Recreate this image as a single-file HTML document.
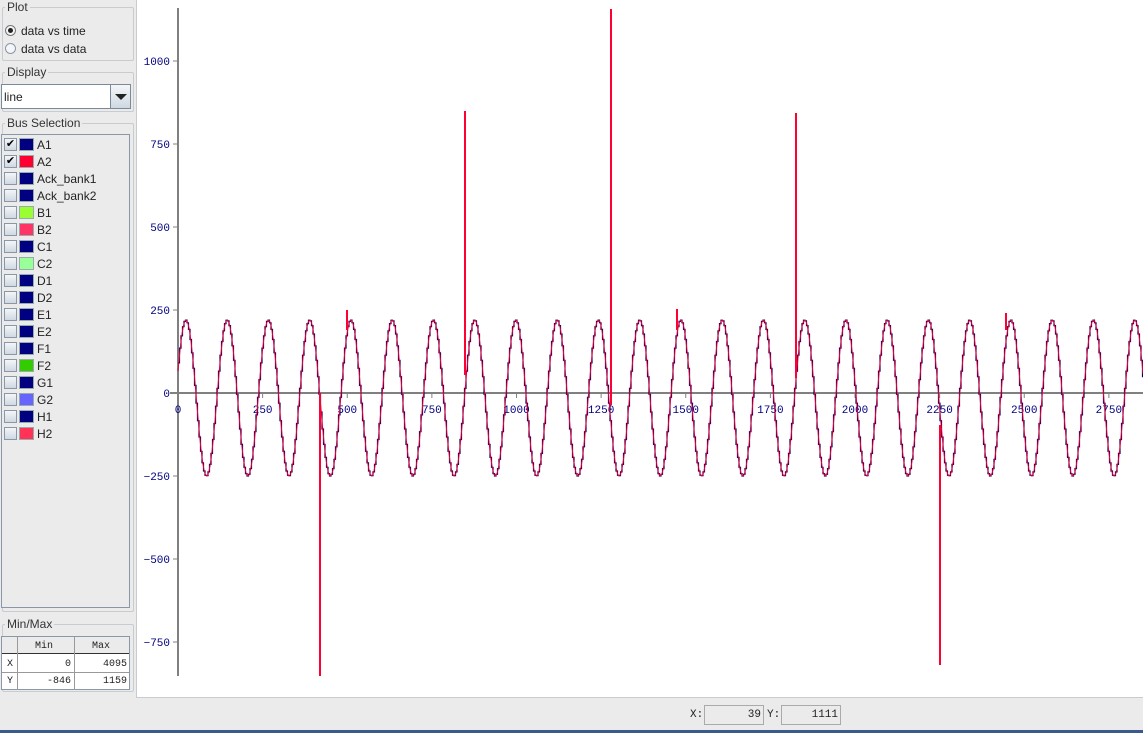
<!DOCTYPE html>
<html><head><meta charset="utf-8"><style>
*{margin:0;padding:0;box-sizing:border-box}
body{width:1143px;height:733px;background:#ebebeb;font-family:"Liberation Sans",sans-serif;font-size:12px;color:#222;position:relative;overflow:hidden}
.abs{position:absolute}
.grp{position:absolute;border:1px solid #c8ccd0;border-radius:2px}
.lg{position:absolute;background:#ebebeb;padding:0 2px;font-size:12px;color:#333}
.row{position:absolute;left:4px;height:16px;width:120px}
.cb{position:absolute;left:0;top:1px;width:13px;height:13px;border:1px solid #8a97a6;background:linear-gradient(#f4f6f8,#cfd8e2);font-size:11px;line-height:11px;text-align:center;color:#000}
.sw{position:absolute;left:15px;top:1px;width:15px;height:13px;border:1px solid #9aa;}
.lb{position:absolute;left:33px;top:1px;font-size:12px}
.mono{font-family:"Liberation Mono",monospace;font-size:10px}
</style></head><body>
<div class="grp" style="left:2px;top:7px;width:132px;height:54px"></div>
<div class="lg" style="left:5px;top:0px">Plot</div>
<div class="abs" style="left:5px;top:25px;width:11px;height:11px;border:1px solid #777;border-radius:50%;background:#f4f4f4"><div style="position:absolute;left:2px;top:2px;width:5px;height:5px;border-radius:50%;background:#222"></div></div>
<div class="abs" style="left:21px;top:24px">data vs time</div>
<div class="abs" style="left:5px;top:43px;width:11px;height:11px;border:1px solid #8a97a6;border-radius:50%;background:#f4f6f8"></div>
<div class="abs" style="left:21px;top:42px">data vs data</div>
<div class="grp" style="left:2px;top:72px;width:132px;height:40px"></div>
<div class="lg" style="left:5px;top:65px">Display</div>
<div class="abs" style="left:1px;top:84px;width:130px;height:25px;border:1px solid #7a8a99;background:#fff"><span style="position:absolute;left:2px;top:5px">line</span><div style="position:absolute;right:0;top:0;width:20px;height:23px;border-left:1px solid #7a8a99;background:linear-gradient(#f4f6f8,#cfd8e2)"><div style="position:absolute;left:4px;top:9px;border-left:6px solid transparent;border-right:6px solid transparent;border-top:6px solid #222"></div></div></div>
<div class="grp" style="left:2px;top:123px;width:132px;height:489px"></div>
<div class="lg" style="left:5px;top:116px">Bus Selection</div>
<div class="abs" style="left:1px;top:134px;width:129px;height:474px;border:1px solid #8a97a6;background:#ebebeb"></div>
<div id="rows"></div>
<div class="grp" style="left:2px;top:624px;width:132px;height:68px"></div>
<div class="lg" style="left:5px;top:617px">Min/Max</div>
<div class="abs mono" style="left:1px;top:636px;width:129px;height:54px;border:1px solid #8a97a6;background:#fff">
<div style="position:absolute;left:0;top:0;width:127px;height:17px;background:#ebebeb;border-bottom:1px solid #333"></div>
<div style="position:absolute;left:15px;top:0;width:1px;height:53px;background:#999"></div>
<div style="position:absolute;left:72px;top:0;width:1px;height:53px;background:#999"></div>
<div style="position:absolute;left:0;top:35px;width:127px;height:1px;background:#999"></div>
<span style="position:absolute;left:33px;top:4px">Min</span><span style="position:absolute;left:90px;top:4px">Max</span>
<span style="position:absolute;left:5px;top:22px">X</span><span style="position:absolute;right:58px;top:22px">0</span><span style="position:absolute;right:2px;top:22px">4095</span>
<span style="position:absolute;left:5px;top:39px">Y</span><span style="position:absolute;right:58px;top:39px">-846</span><span style="position:absolute;right:2px;top:39px">1159</span>
</div>
<div class="abs" style="left:136px;top:0;width:1007px;height:698px;background:#fff;border-left:1px solid #c8ccd0;border-bottom:1px solid #c8ccd0"></div>
<svg class="abs" style="left:0;top:0" width="1143" height="733" id="sv"></svg>
<div class="abs mono" style="left:690px;top:709px;font-size:11px">X:</div>
<div class="abs mono" style="left:704px;top:705px;width:60px;height:20px;border:1px solid #aaa;text-align:right;padding:3px 2px;font-size:11px">39</div>
<div class="abs mono" style="left:767px;top:709px;font-size:11px">Y:</div>
<div class="abs mono" style="left:781px;top:705px;width:60px;height:20px;border:1px solid #aaa;text-align:right;padding:3px 2px;font-size:11px">1111</div>
<div class="abs" style="left:0;top:730px;width:1143px;height:3px;background:#3a5a8c"></div>
<script>
var names=[["A1","#000080",1],["A2","#ff0033",1],["Ack_bank1","#000080"],["Ack_bank2","#000080"],["B1","#99ff33"],["B2","#ff3366"],["C1","#000080"],["C2","#99ff99"],["D1","#000080"],["D2","#000080"],["E1","#000080"],["E2","#000080"],["F1","#000080"],["F2","#33cc00"],["G1","#000080"],["G2","#6666ff"],["H1","#000080"],["H2","#ff3355"]];
var h="";names.forEach(function(n,i){h+='<div class="row" style="top:'+(137+i*17)+'px"><div class="cb">'+(n[2]?'&#10004;':'')+'</div><div class="sw" style="background:'+n[1]+'"></div><div class="lb">'+n[0]+'</div></div>';});
document.getElementById("rows").innerHTML=h;
var s='';var X0=178,Y0=393,sy=0.332,sx=0.3385;
s+='<line x1="178" y1="8" x2="178" y2="676" stroke="#808080" stroke-width="2"/>';
s+='<line x1="170" y1="393" x2="1143" y2="393" stroke="#808080" stroke-width="2"/>';
[1000,750,500,250,0,-250,-500,-750].forEach(function(v){var y=Y0-v*sy;s+='<line x1="173" y1="'+y+'" x2="178" y2="'+y+'" stroke="#808080"/><text x="170" y="'+(y+4)+'" text-anchor="end" font-family="Liberation Mono,monospace" font-size="11" fill="#000080">'+(v<0?'\u2212'+(-v):v)+'</text>';});
for(var v=0;v<=2750;v+=250){var x=X0+v*sx;s+='<line x1="'+x+'" y1="393" x2="'+x+'" y2="398" stroke="#808080"/><text x="'+x+'" y="413" text-anchor="middle" font-family="Liberation Mono,monospace" font-size="11" fill="#000080">'+v+'</text>';}
var P=41.25,ph=186-P/4;
function f(x){return 398-78*Math.sin(2*Math.PI*(x-ph)/P);}
var b='',r='';
for(var x=178;x<=1143;x+=1.5){var y=f(x+0.75).toFixed(1);b+=(b?' L':'M')+x+' '+y+' L'+(x+1.5)+' '+y;}
for(var x=178;x<=1143;x+=1){r+=(r?' L':'M')+x+' '+f(x).toFixed(1);}
s+='<path d="'+b+'" fill="none" stroke="#000060" stroke-width="1.2"/>';
s+='<path d="'+r+'" fill="none" stroke="#e8003a" stroke-width="1"/>';
[[320,393,676],[465,111,375],[611,9,405],[796,113,378],[940,425,665],[347,310,330],[677,309,330],[1006,313,330]].forEach(function(k){s+='<line x1="'+k[0]+'" y1="'+k[1]+'" x2="'+k[0]+'" y2="'+k[2]+'" stroke="#ff0033" stroke-width="2"/>';});
document.getElementById("sv").innerHTML=s;
</script>
</body></html>
